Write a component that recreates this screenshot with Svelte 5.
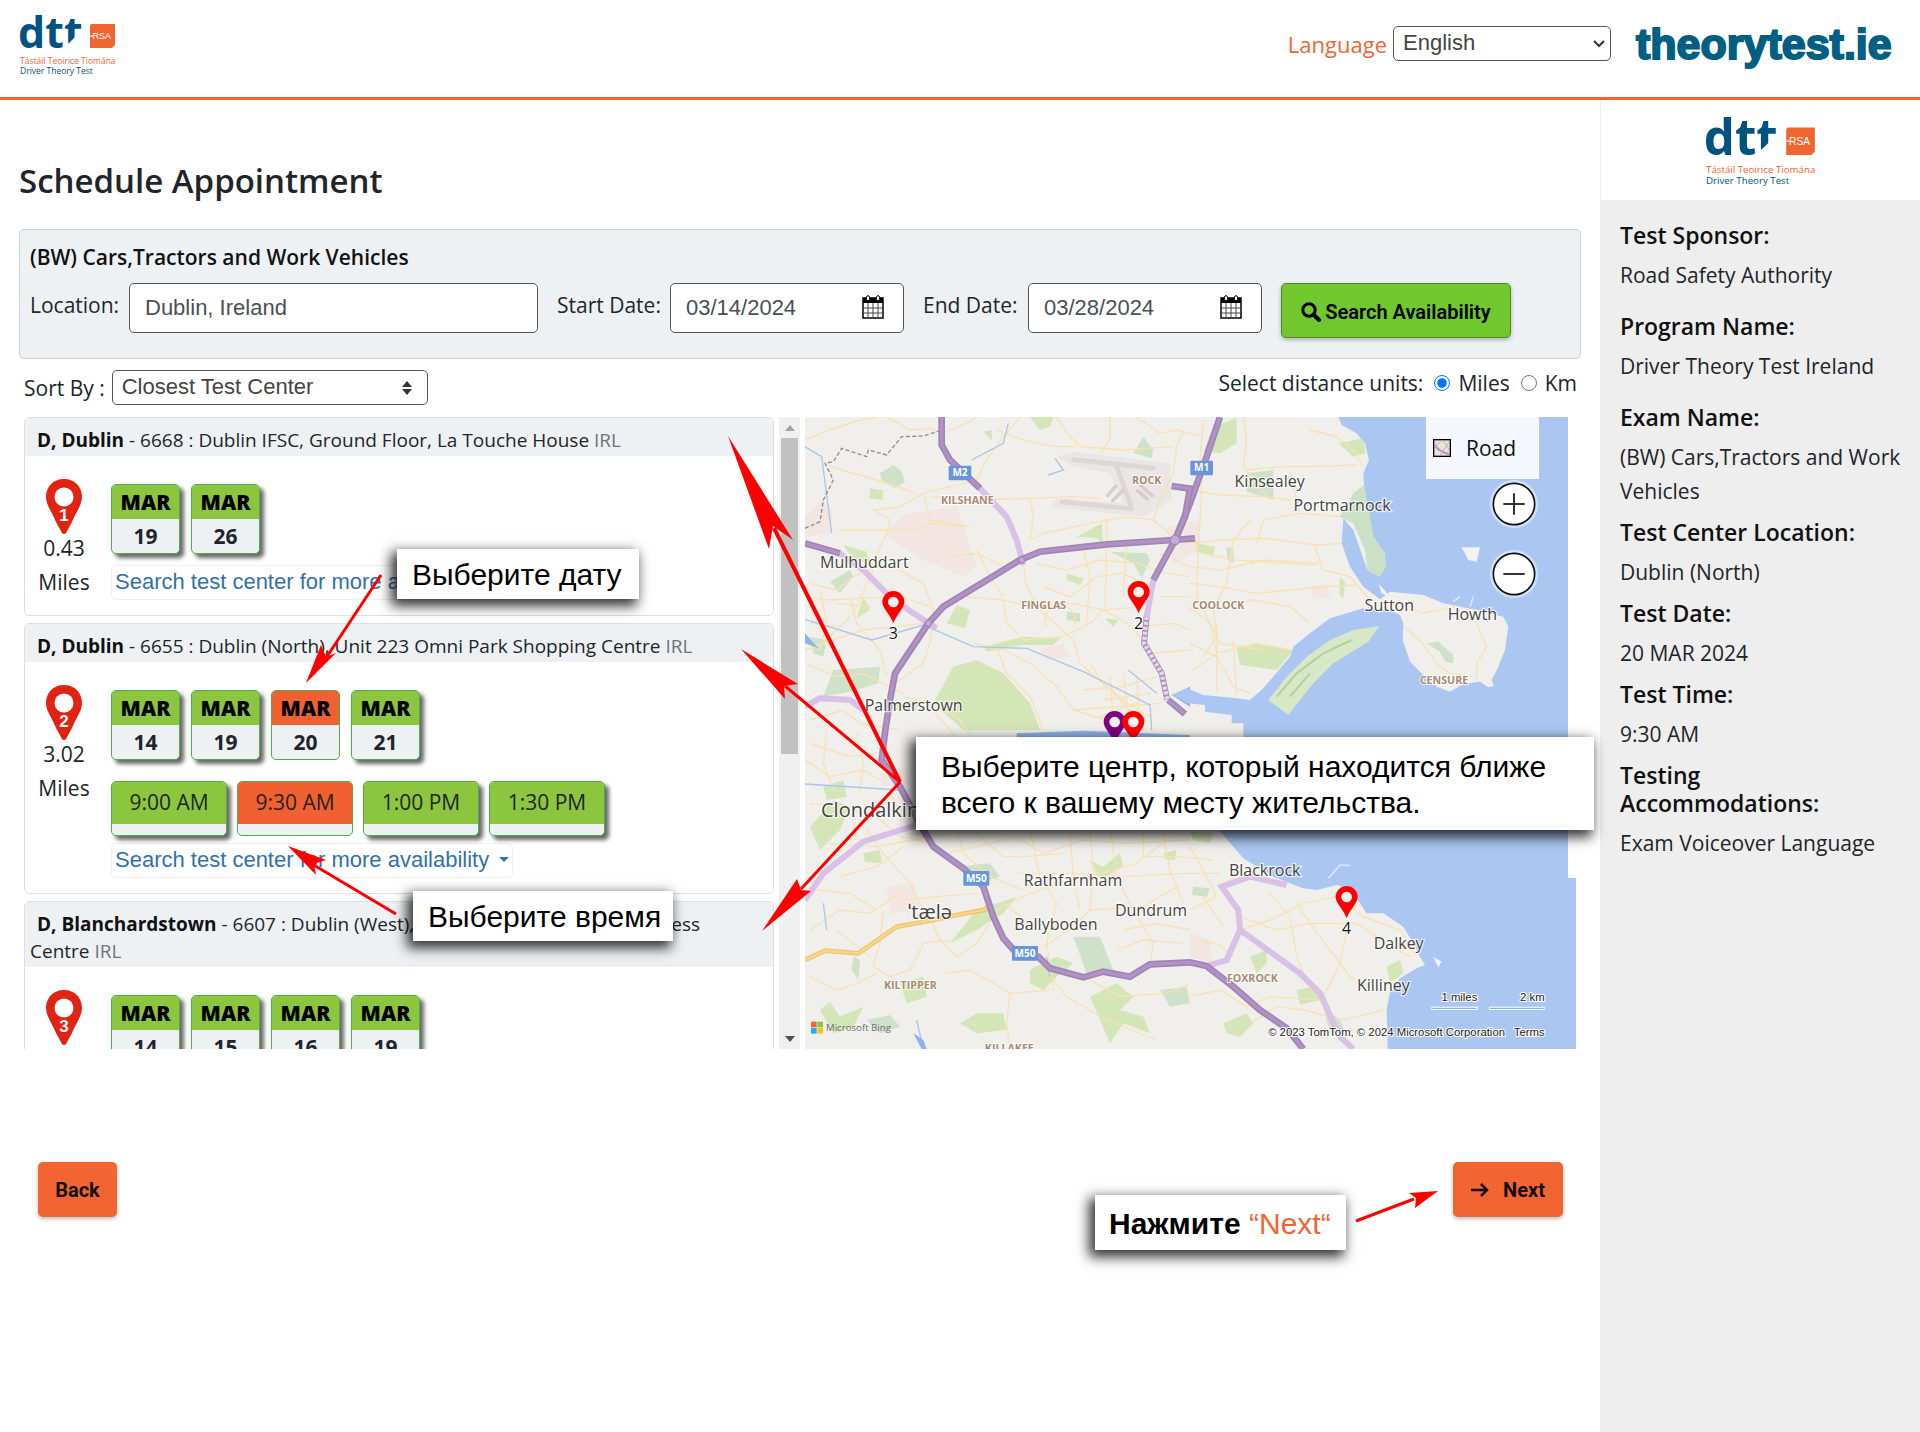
<script>
  let language = $state('English');
  let sort = $state('Closest Test Center');
  let place = $state('Dublin, Ireland');
  let startDate = $state('03/14/2024');
  let endDate = $state('03/28/2024');
  let units = $state('Miles');

  const centers = [
    {
      pin: 1, town: 'D, Dublin', name: ' - 6668 : Dublin IFSC, Ground Floor, La Touche House ', distance: '0.43',
      dates: [{ day: 19 }, { day: 26 }], times: []
    },
    {
      pin: 2, town: 'D, Dublin', name: ' - 6655 : Dublin (North), Unit 223 Omni Park Shopping Centre ', distance: '3.02',
      dates: [{ day: 14 }, { day: 19 }, { day: 20, on: true }, { day: 21 }],
      times: [{ at: '9:00 AM' }, { at: '9:30 AM', on: true }, { at: '1:00 PM' }, { at: '1:30 PM' }]
    },
    {
      pin: 3, town: 'D, Blanchardstown', name: ' - 6607 : Dublin (West), Unit 6, Westend Office Business Centre ', distance: '5.19',
      dates: [{ day: 14 }, { day: 15 }, { day: 16 }, { day: 19 }], times: []
    }
  ];

  const summary = [
    { label: 'Test Sponsor:', value: 'Road Safety Authority', wide: true },
    { label: 'Program Name:', value: 'Driver Theory Test Ireland', wide: true },
    { label: 'Exam Name:', value: '(BW) Cars,Tractors and Work Vehicles' },
    { label: 'Test Center Location:', value: 'Dublin (North)' },
    { label: 'Test Date:', value: '20 MAR 2024' },
    { label: 'Test Time:', value: '9:30 AM' },
    { label: 'Testing Accommodations:', value: 'Exam Voiceover Language' }
  ];

  const motorway = [
    'M1215 385L1150 390L950 403L750 425L690 450L460 590L415 640L315 790L300 870L286 960L275 1050L330 1130L400 1260L430 1310L520 1375L580 1430L610 1520L640 1585L680 1630L745 1640L780 1675L880 1702L940 1685L1020 1700L1080 1663L1200 1657L1250 1668L1330 1730L1410 1800L1490 1855L1540 1917',
    'M455 21L455 105L480 150L570 235',
    'M1290 21L1250 140L1200 280L1155 390L1090 510',
    'M1145 228L1200 236L1185 320L1155 390',
    'M45 400L150 430',
    'M1135 870L1185 912'
  ];
  const trunk = [
    'M570 235L650 320L680 390L700 465', 'M150 430L220 480L300 560L370 610L440 655',
    'M1090 510L1070 620', 'M45 890L90 865L180 870L220 900',
    'M45 1470L100 1390L220 1295L380 1245',
    'M1490 1425L1380 1400L1295 1430L1345 1500L1350 1560L1530 1690L1590 1750L1650 1880L1690 1917',
    'M1350 1560L1310 1650L1250 1668'
  ];
  const lanes = [
    'M45 90L120 60L210 30L260 21', 'M290 21L360 60L420 55L455 70L530 40L560 21', 'M690 21L640 80L590 150L560 210L480 230L400 250L330 290L250 300L300 330L290 370L250 450L240 480',
    'M400 250L420 330L530 350M420 260L560 270L720 265L850 260L940 265', 'M620 60L700 90L790 110L860 110M960 21L960 90L930 130M800 21L830 70L870 110L1000 120L1150 110',
    'M120 170L260 210L380 250M150 360L370 360L420 340L540 350M720 265L730 320L720 390', 'M720 390L760 370L900 340L1010 320L1090 330L1150 380M950 320L950 400L945 600',
    'M1090 330L1110 270L1150 190L1160 110L1180 60M1040 21L1110 70L1160 60L1240 80', 'M45 560L120 570L200 565L330 560L420 590M60 520L140 540L190 500L260 470',
    'M100 700L190 610L250 480M45 720L130 690L220 660L400 640', 'M180 560L200 640L270 720L290 800M290 460L400 520L430 600L420 700L400 760L300 830',
    'M470 590L520 560L640 570L720 590L850 580L940 600L1060 590', 'M700 465L710 530L760 610L850 690L870 760L960 840L1020 900',
    'M640 570L650 640L700 690L820 680L900 640L940 600L1010 640L1060 690', 'M770 650A45 45 0 1 1 850 650M760 530L840 560L920 500L1000 490L1080 530',
    'M740 460L830 480L930 450L1040 460L1130 490L1200 500', 'M550 700L640 720L720 760L800 830L850 900L950 930L1060 940M620 710L650 790L720 860L760 960',
    'M900 760L940 820L1010 880L1080 920M880 840L1000 830L1100 800M940 870L1080 850M960 800L970 940M1000 790L1020 950M1040 800L1050 960', 'M850 900L1110 880M930 920L1060 870',
    'M1110 430L1200 470L1290 480L1420 450L1600 460', 'M1200 240L1290 255L1420 260L1500 270M1240 30L1230 150L1235 260L1225 400L1220 560L1290 700',
    'M1200 400L1290 390L1430 385L1580 405L1660 400M1360 21L1370 90L1360 170L1400 220L1440 270M1370 180L1480 170L1560 170L1700 165', 'M1500 190L1530 310L1420 330L1400 400M1530 310L1650 320M1560 60L1640 80L1690 120L1720 170',
    'M1380 330L1330 390L1310 520L1270 600L1280 680L1240 740', 'M1200 520L1290 530L1400 550L1500 540L1610 530L1700 525M1240 430L1340 450L1580 465',
    'M1200 600L1300 590L1390 570L1500 590L1560 640', 'M1210 780L1280 730L1400 700L1500 720M1280 730L1260 640L1200 590M1290 700L1420 720M1280 640V850M1330 690L1340 860M1200 700L1280 740L1330 830L1380 850',
    'M1570 400L1600 480L1680 500L1740 570L1790 580L1900 610L1990 590L2060 640L2090 710L2060 760L2060 810', 'M1840 650L1890 690L1940 760L1980 790L2050 800',
    'M45 760L140 800L220 790L340 850M60 930L160 900L210 940L330 960M340 860L430 880L510 930L560 1000M420 890L480 960L540 1050',
    'M45 1050L120 1100L220 1080L270 1110M110 960L100 1060L130 1140M200 970L220 1060L210 1150M60 1000L180 1040L260 1030',
    'M60 1180L160 1190L260 1220L330 1280L430 1300M230 1260L280 1330L360 1420L400 1500M110 1300L260 1310L370 1290L480 1270M150 1400L260 1370L340 1310',
    'M280 1500L270 1600L250 1670L300 1700L360 1680L400 1600L480 1590M420 1520L450 1590L500 1640L560 1600L600 1540M330 1470L440 1460L560 1450',
    'M470 1330L560 1310L680 1280L760 1330L880 1290L1000 1300L1200 1290M620 1500L700 1460L800 1420L900 1400L1040 1360L1130 1290',
    'M720 1260L750 1400L800 1480L770 1600L790 1740M760 1610L840 1560L900 1500L1060 1490L1160 1430', 'M840 1260L850 1400L870 1500M960 1250L980 1400L1030 1500L1090 1600L1080 1660',
    'M1060 1260L1060 1340L1160 1340L1270 1350M680 1390L850 1390L1000 1400L1180 1390L1290 1390', 'M880 1700L990 1760L1130 1750L1200 1720M780 1700L830 1760L950 1830L1100 1890',
    'M470 1690L540 1680L610 1720L660 1750L780 1740M660 1750L650 1840L660 1917M60 1700L140 1740L200 1720L260 1690M140 1560L240 1640',
    'M1200 1310L1250 1400L1280 1460L1200 1500M1290 1430L1350 1390L1420 1410', 'M1350 1560L1440 1530L1540 1480L1640 1460L1720 1520L1830 1560L1880 1640',
    'M1350 1520L1460 1560L1560 1540L1700 1540L1790 1600L1860 1640M1440 1450L1500 1520L1520 1640L1540 1690', 'M1560 1540L1620 1620L1680 1700L1760 1740M1670 1560L1650 1660L1600 1760M1520 1480L1560 1540',
    'M1220 1590L1280 1600L1330 1640M1200 1760L1290 1740L1370 1790L1440 1760L1590 1770', 'M1380 1840L1460 1790L1540 1800L1660 1830L1780 1800M1240 1460L1300 1550',
    'M500 1260L520 1330L600 1400L700 1440M560 1270L640 1340L700 1340L820 1330M900 1260L910 1380L900 1500M1120 1270L1140 1380L1180 1480M640 1480L720 1540L860 1560M1000 1560L1100 1540L1200 1560M980 1620L1060 1590L1180 1600',
    'M60 1560L150 1500L240 1510L330 1450M80 1440L180 1450L260 1500M180 1180L200 1290M300 1150L340 1230M90 540L110 640L90 720M140 580L240 590M60 640L150 650',
    'M560 420L600 500L640 560M480 440L560 430L640 470M880 420L900 500L890 640M1010 410L1000 560M1050 650L1150 640L1200 660M1080 730L1200 720M1110 560L1200 560'
  ];
  const fields = [
    'M270 190L310 165L335 185L345 215L315 235L275 210Z', 'M240 235L280 240L278 270L238 265Z', 'M720 21L790 21L780 50L750 60Z', 'M1060 80L1090 120L1085 145L1030 130Z',
    'M580 65L605 60L605 90Z', 'M860 380L935 340L940 400L920 385Z', 'M960 425L1070 430L1080 450L1055 505L1030 460Z', 'M830 490L880 505L870 525L830 510Z',
    'M160 405L230 425L240 460L190 450Z', 'M120 515L180 480L190 500L150 550Z', 'M220 560L240 600L200 625Z', 'M470 640L500 585L540 600L525 655Z',
    'M100 860L130 780L270 770L265 820L180 845Z', 'M490 770L560 750L640 790L720 880L750 960L520 960L430 880Z', 'M580 710L700 680L810 685L790 705L700 705L590 725Z',
    'M830 605L870 610L870 635L830 630Z', 'M945 625L985 630L970 650Z', 'M1240 125L1270 50L1340 25L1340 100L1290 130Z', 'M1370 190L1450 180L1450 270L1370 245Z',
    'M1645 100L1720 85L1725 130L1690 140Z', 'M1220 400L1275 410L1270 440L1220 425Z', 'M1310 410L1330 415L1330 460L1312 450Z', 'M1340 710L1410 700L1510 720L1460 780L1350 765Z',
    'M1650 500L1665 515L1660 565L1648 555Z', 'M1910 700L1945 695L1990 735L1990 760L1965 755L1950 725Z', 'M60 1250L130 1170L180 1190L150 1260L90 1320Z', 'M220 1330L270 1320L275 1360L225 1355Z',
    'M500 1370L600 1360L630 1400L560 1420Z', 'M900 1350L940 1370L990 1330L1000 1370L930 1410Z', 'M480 1600L560 1500L680 1460L640 1510L560 1560Z', 'M850 1580L930 1580L970 1680L1000 1700L890 1690Z',
    'M720 1680L800 1640L850 1660L800 1700L760 1740L720 1720Z', 'M90 1800L120 1775L150 1820L220 1790L190 1850L130 1870Z', 'M230 1830L300 1815L330 1850L270 1870Z', 'M510 1840L560 1810L640 1810L650 1860L560 1870Z',
    'M900 1760L980 1720L1030 1760L990 1800L1060 1820L1080 1870L1000 1840L960 1900L930 1830Z', 'M1110 1740L1190 1730L1200 1780L1140 1790Z', 'M1300 1840L1370 1810L1390 1840L1350 1880L1310 1870Z',
    'M1520 1740L1570 1730L1590 1770L1530 1785Z', 'M1600 1790L1650 1830L1665 1870L1620 1870Z', 'M1790 1670L1830 1650L1840 1690L1800 1720Z', 'M1380 1640L1430 1620L1430 1660L1400 1690Z',
    'M1210 1430L1260 1435L1250 1460L1205 1455Z', 'M1200 1265L1270 1270L1260 1300L1210 1290Z', 'M330 1720L400 1700L410 1760L350 1780Z', 'M190 1640L210 1650L205 1710L185 1680Z',
    'M100 1130L160 1110L170 1160L110 1170Z', 'M310 880L380 870L385 900L320 900Z', 'M60 680L110 690L100 740L70 730Z', 'M1120 1330L1160 1320L1155 1350L1130 1350Z'
  ];
  const urban = [
    'M280 370L350 310L500 290L560 470L520 500L400 450Z', 'M45 320L100 270L130 300L120 370L45 380Z', 'M750 720L820 700L840 740L770 750Z', 'M270 1090L350 1070L360 1120L280 1130Z',
    'M290 1430L370 1420L390 1500L300 1510Z', 'M1560 530L1610 520L1620 560L1570 570Z', 'M1200 1570L1260 1590L1270 1660L1200 1640Z', 'M1130 350L1230 330L1230 420L1150 460Z'
  ];
  const towns = [
    { x: 223, y: 475, t: 'Mulhuddart' }, { x: 371, y: 902, t: 'Palmerstown' }, { x: 1439, y: 232, t: 'Kinsealey' }, { x: 1656, y: 302, t: 'Portmarnock' },
    { x: 1798, y: 602, t: 'Sutton' }, { x: 2047, y: 631, t: 'Howth' }, { x: 798, y: 1560, t: 'Ballyboden' }, { x: 1083, y: 1517, t: 'Dundrum' },
    { x: 849, y: 1428, t: 'Rathfarnham' }, { x: 1424, y: 1397, t: 'Blackrock' }, { x: 1826, y: 1616, t: 'Dalkey' }, { x: 1780, y: 1742, t: 'Killiney' }
  ];
  const areas = [
    { x: 532, y: 282, t: 'KILSHANE' }, { x: 1070, y: 222, t: 'ROCK' }, { x: 761, y: 597, t: 'FINGLAS' }, { x: 1285, y: 597, t: 'COOLOCK' },
    { x: 1962, y: 822, t: 'CENSURE' }, { x: 361, y: 1736, t: 'KILTIPPER' }, { x: 1387, y: 1715, t: 'FOXROCK' }, { x: 658, y: 1926, t: 'KILLAKEE' }
  ];
  const shields = [
    { x: 476, y: 167, t: 'M2' }, { x: 1201, y: 152, t: 'M1' }, { x: 520, y: 1383, t: 'M50' }, { x: 666, y: 1608, t: 'M50' }
  ];
  const markers = [
    { x: 974, y: 1000, c: '#800080', n: '' }, { x: 1030, y: 1000, c: '#ff0000', n: '' }, { x: 1046, y: 610, c: '#ff0000', n: 2 },
    { x: 310, y: 640, c: '#ff0000', n: 3 }, { x: 1670, y: 1525, c: '#ff0000', n: 4 }
  ];
</script>

{#snippet logo(cls)}
  <svg class={cls} viewBox="0 0 192 124" role="img" aria-label="Driver Theory Test, RSA">
    <text class="dtt" x="-4" y="68">dtt</text>
    <path d="M88 60H96L117 39H130V76H88Z" fill="#fff" />
    <path d="M142 20H190V62L184 68H140V24Z" fill="#f16531" />
    <path d="M139 44H147" stroke="#fff" stroke-width="2" />
    <text class="rsa" x="145" y="50">RSA</text>
    <text class="irish" x="0" y="99">Tástáil Teoirice Tiomána</text>
    <text class="eng" x="0" y="119">Driver Theory Test</text>
  </svg>
{/snippet}

{#snippet calendar()}
  <svg class="cal" viewBox="0 0 22 24" aria-hidden="true">
    <path d="M1 3H21V23H1Z" fill="#fff" stroke="#000" stroke-width="1.5" />
    <path d="M1 3H21V8H1Z" />
    <path d="M6 8V23M11 8V23M16 8V23M1 13H21M1 18H21" stroke="#444" fill="none" />
    <rect x="4.500" y="0.700" width="3" height="5" rx="1.500" fill="#fff" stroke="#000" />
    <rect x="14.500" y="0.700" width="3" height="5" rx="1.500" fill="#fff" stroke="#000" />
  </svg>
{/snippet}

<header class="top">
  {@render logo('logo')}
  <div class="lang">
    <label for="language">Language</label>
    <span class="pick">
      <select id="language" bind:value={language}><option>English</option></select>
      <svg viewBox="0 0 12 8" class="chev" aria-hidden="true"><path d="M1 1L6 6L11 1" fill="none" stroke="#333" stroke-width="2" /></svg>
    </span>
    <span class="site">theorytest.ie</span>
  </div>
</header>

<div class="page">
  <main>
    <h1>Schedule Appointment</h1>

    <section class="search">
      <h2>(BW) Cars,Tractors and Work Vehicles</h2>
      <div class="fields">
        <label class="l1" for="place">Location:</label>
        <input id="place" class="box" bind:value={place} />
        <label class="l2" for="start">Start Date:</label>
        <span class="date"><input id="start" class="box" bind:value={startDate} />{@render calendar()}</span>
        <label class="l2" for="end">End Date:</label>
        <span class="date"><input id="end" class="box" bind:value={endDate} />{@render calendar()}</span>
        <button class="find">
          <svg viewBox="0 0 20 20" aria-hidden="true"><circle cx="8" cy="8" r="6.200" fill="none" stroke="#000" stroke-width="3" /><path d="M12.500 12.500L18 18" stroke="#000" stroke-width="4" stroke-linecap="round" /></svg>
          Search Availability
        </button>
      </div>
    </section>

    <div class="sortbar">
      <label for="sort">Sort By :</label>
      <span class="pick sort">
        <select id="sort" bind:value={sort}><option>Closest Test Center</option></select>
        <svg viewBox="0 0 10 14" class="updown" aria-hidden="true"><path d="M0 6L5 0L10 6ZM0 8H10L5 14Z" fill="#333" /></svg>
      </span>
      <div class="units">
        <span>Select distance units:</span>
        <label><input type="radio" name="units" value="Miles" bind:group={units} />Miles</label>
        <label><input type="radio" name="units" value="Km" bind:group={units} />Km</label>
      </div>
    </div>

    <div class="results">
      <div class="list">
        {#each centers as c}
          <article>
            <h3><b>{c.town}</b>{c.name}<span class="irl">IRL</span></h3>
            <div class="body">
              <div class="where">
                <svg viewBox="0 0 38 55" aria-hidden="true">
                  <path d="M19 0C8 0 1 8 1 18C1 26 7 33 11 43L17 54Q19 56 21 54L27 43C31 33 37 26 37 18C37 8 30 0 19 0Z" fill="#e12313" />
                  <circle cx="19" cy="18" r="9.500" fill="#fff" />
                  <text x="19" y="42">{c.pin}</text>
                </svg>
                <span>{c.distance}</span>
                <span>Miles</span>
              </div>
              <div class="slots">
                <div class="row">
                  {#each c.dates as d}
                    <button class="day" class:on={d.on}><b>MAR</b><span>{d.day}</span></button>
                  {/each}
                </div>
                {#if c.times.length}
                  <div class="row times">
                    {#each c.times as t}
                      <button class="time" class:on={t.on}><span>{t.at}</span></button>
                    {/each}
                  </div>
                {/if}
                <button class="more" class:near={c.times.length}>Search test center for more availability <i></i></button>
              </div>
            </div>
          </article>
        {/each}
      </div>

      <div class="bar" aria-hidden="true">
        <svg viewBox="0 0 10 6"><path d="M0 6L5 0L10 6Z" fill="#a3a3a3" /></svg>
        <div class="thumb"></div>
        <svg viewBox="0 0 10 6"><path d="M0 0H10L5 6Z" fill="#505050" /></svg>
      </div>

      <svg class="map" viewBox="45 21 2313 1896" preserveAspectRatio="xMinYMin slice" role="img" aria-label="Map of Dublin test centers">
        <defs>
          <clipPath id="land">
            <path d="M45 21H1645L1655 45L1700 70L1725 100L1737 150L1720 190L1722 225L1735 300L1750 380L1785 430L1787 470L1768 500L1732 480L1718 440L1690 360L1660 325L1655 400L1680 470L1720 530L1770 568L1800 545L1900 555L1960 580L2060 600L2140 620L2155 650L2145 720L2125 770L2105 810L2112 828L2095 832L2070 815L2020 822L1980 845L1940 830L1895 790L1860 755L1838 690L1840 640L1830 615L1800 600L1720 595L1620 625L1560 670L1510 710L1500 740L1420 835L1380 870L1340 865L1240 855L1190 835L1150 855L1195 880L1245 885L1245 905L1325 915L1325 940L1360 940V1000H1200V1240H1275L1300 1275L1360 1345L1450 1400L1540 1435L1580 1440L1640 1425L1680 1435L1730 1510L1780 1510L1840 1550L1870 1600L1890 1640L1905 1665L1880 1675L1830 1705L1800 1745L1790 1800L1793 1917H45Z" />
          </clipPath>
        </defs>
        <rect x="45" y="21" width="2313" height="1896" fill="#abc6f1" />
        <g clip-path="url(#land)">
          <rect x="45" y="21" width="2313" height="1896" fill="#f0efeb" />
          {#each urban as d}<path {d} fill="#f3e5e1" />{/each}
          {#each fields as d, i}<path {d} fill={i % 3 === 0 ? '#d0e1ca' : '#d4e5b8'} />{/each}
          <path d="M1690 250L1722 225L1785 430L1787 470L1768 500L1732 480L1725 420L1690 340L1650 320Z" fill="#cbe0c4" />
          <path d="M800 140L850 125L1140 160L1145 270L1060 320L780 290L800 265L1000 280L960 190L850 170Z" fill="#e9e6e3" />
          <path d="M845 148L1095 175M810 275L1030 297M975 155L1025 295" stroke="#dcd7d5" stroke-width="14" fill="none" />
          <path d="M950 260L980 225M965 275L1000 240M1040 240L1075 270M1050 225L1090 260" stroke="#d8cbcb" stroke-width="10" />
          {#each lanes as d}<path {d} class="lane" />{/each}
          <path class="river" d="M45 628L245 690L400 645L550 710L710 715L880 785L1080 885L1085 960M655 40L640 100L545 150M795 145L820 180L775 195M45 110L95 140L125 370M45 1122L330 1140M770 1640L780 1700M380 1830L400 1917M100 1480L110 1560M1015 780L1100 850" />
          <path d="M370 1870L400 1890L410 1917H395ZM45 670L85 715L45 700ZM1145 855L1200 830V890ZM680 970L880 962L1200 975V1000H680Z" fill="#8fb2ea" />
          <path d="M45 355L90 335L100 270L130 210L105 160L130 155L155 115L230 140L235 120L290 135L335 80L400 78L455 60" class="border" />
          <path d="M45 1650L105 1622L205 1630L320 1550L430 1530L500 1515L580 1500L605 1485" fill="none" stroke="#eec06a" stroke-width="14" />
          <path d="M45 1650L105 1622L205 1630L320 1550L430 1530L500 1515L580 1500L605 1485" fill="none" stroke="#fad584" stroke-width="8" />
          {#each trunk as d}<path {d} class="trunk" />{/each}
          <path d="M1070 620L1062 700L1115 790L1132 870" fill="none" stroke="#a98fb4" stroke-width="18" />
          <path d="M1070 620L1062 700L1115 790L1132 870" fill="none" stroke="#e6d7ec" stroke-width="13" stroke-dasharray="10 5" />
          {#each motorway as d}<path {d} class="mway" /><path {d} class="mway in" />{/each}
          <circle cx="1155" cy="390" r="14" class="ring" />
          <circle cx="695" cy="450" r="9" class="ring" />
          <circle cx="415" cy="640" r="9" class="ring" />
        </g>
        <path d="M1768 648L1735 695L1630 760L1570 820L1495 915L1435 870L1490 800L1550 740L1620 690L1690 660Z" fill="#d7e8c6" />
        <path d="M1460 860L1520 790L1600 730L1685 690M1500 860L1560 790" fill="none" stroke="#b4d09f" stroke-width="6" />
        <path d="M2015 412L2070 412L2060 455L2035 450ZM1930 1640L1955 1655L1945 1672ZM1765 520L1800 560L1775 550Z" fill="#f3f3f1" />
        <path d="M1615 1405L1650 1365L1680 1366M1990 575L2010 560M2040 590L2050 560" fill="none" stroke="#dbe6f6" stroke-width="5" />
        {#each shields as s}
          <rect x={s.x} y={s.y} width={s.t.length > 2 ? 78 : 68} height="44" rx="3" fill="#6796dc" />
          <text class="shield" x={s.x + (s.t.length > 2 ? 39 : 34)} y={s.y + 32}>{s.t}</text>
        {/each}
        {#each towns as p}<text class="town" x={p.x} y={p.y}>{p.t}</text>{/each}
        <text class="town big" x="93" y="1221" text-anchor="start">Clondalkin</text>
        <text class="town big" x="420" y="1528">ˈtælə</text>
        {#each areas as p}<text class="area" x={p.x} y={p.y}>{p.t}</text>{/each}
        {#each markers as m}
          <path d="M{m.x} {m.y}C{m.x - 10} {m.y - 28} {m.x - 33} {m.y - 45} {m.x - 33} {m.y - 64}A33 33 0 0 1 {m.x + 33} {m.y - 64}C{m.x + 33} {m.y - 45} {m.x + 10} {m.y - 28} {m.x} {m.y}Z" fill={m.c} />
          <circle cx={m.x} cy={m.y - 64} r="16" fill="#f4f1ee" />
          <text class="num" x={m.x} y={m.y + 48}>{m.n}</text>
        {/each}
        <rect x="1908" y="21" width="339" height="186" fill="#f4f8fe" />
        <rect x="1931" y="89" width="50" height="50" fill="#e9e4da" stroke="#000" stroke-width="4" />
        <path d="M1934 104Q1945 125 1978 132" fill="none" stroke="#b48ed0" stroke-width="6" />
        <path d="M1934 110L1955 92M1960 92L1978 120M1950 137L1978 95" fill="none" stroke="#b9b3a2" stroke-width="3" />
        <text class="road" x="2028" y="137">Road</text>
        {#each [282, 492] as y}
          <circle cx="2172" cy={y} r="72" fill="#d3e1f7" />
          <circle cx="2172" cy={y} r="62" fill="#fff" stroke="#111" stroke-width="5" />
          <path d="M2140 {y}H2204" stroke="#333" stroke-width="6" />
        {/each}
        <path d="M2172 250V314" stroke="#333" stroke-width="6" />
        <text class="scale" x="2062" y="1774">1 miles</text>
        <text class="scale" x="2264" y="1774">2 km</text>
        <path d="M1924 1795H2063M2097 1795H2264" stroke="#fff" stroke-width="10" />
        <path d="M1927 1795H2060M2100 1795H2261" stroke="#7db2f5" stroke-width="4" />
        <text class="scale" x="2145" y="1877">© 2023 TomTom, © 2024 Microsoft Corporation</text>
        <text class="scale" x="2264" y="1877">Terms</text>
        <path d="M63 1835H80V1852H63Z" fill="#f2653a" /><path d="M82 1835H99V1852H82Z" fill="#8cc540" />
        <path d="M63 1854H80V1871H63Z" fill="#1fb0ef" /><path d="M82 1854H99V1871H82Z" fill="#fdc317" />
        <text class="bing" x="108" y="1863">Microsoft Bing</text>
        <rect x="2334" y="21" width="24" height="1383" fill="#fff" />
      </svg>
    </div>

    <div class="nav">
      <button class="go">Back</button>
      <button class="go next">
        <svg viewBox="0 0 18 16" aria-hidden="true"><path d="M0 8H16M10 2L16 8L10 14" fill="none" stroke="#111" stroke-width="2.500" /></svg>
        Next
      </button>
    </div>

    <svg class="arrows" viewBox="0 100 1600 1332" aria-hidden="true">
      <g fill="none" stroke="#f00">
        <path d="M381 575L326 658" stroke-width="3" />
        <path d="M396 914L312 864" stroke-width="3" />
        <path d="M900 782L774 528" stroke-width="4" />
        <path d="M900 782L785 686" stroke-width="3" />
        <path d="M900 782L801 889" stroke-width="3" />
        <path d="M1356 1221L1414 1199" stroke-width="3" />
      </g>
      <g fill="#f00">
        <path d="M306 683L321 645L326 657L336 653Z" />
        <path d="M288 846L326 860L314 864L316 875Z" />
        <path d="M728 436L793 540L773 526L769 549Z" />
        <path d="M741 649L798 684L784 686L785 699Z" />
        <path d="M762 931L797 879L801 890L811 891Z" />
        <path d="M1438 1191L1409 1193L1416 1198L1415 1208Z" />
      </g>
    </svg>

    <div class="note pickdate">Выберите дату</div>
    <div class="note picktime">Выберите время</div>
    <div class="note pickplace">Выберите центр, который находится ближе<br />всего к вашему месту жительства.</div>
    <div class="note picknext"><b>Нажмите</b> <span>“Next“</span></div>
  </main>

  <aside>
    <div class="brand">{@render logo('logo large')}</div>
    <dl>
      {#each summary as s}
        <div class:wide={s.wide}>
          <dt>{s.label}</dt>
          <dd>{s.value}</dd>
        </div>
      {/each}
    </dl>
  </aside>
</div>

<style>
  :global(body) { background: #fff; color: #212529; font-family: 'Open Sans', 'Noto Sans', sans-serif; font-size: 21px; }
  :global(*) { box-sizing: border-box; }
  button, input, select { font: inherit; color: inherit; }
  button { cursor: pointer; padding: 0; }
  h1, h2, h3, dl, dd { margin: 0; }

  .top { display: flex; justify-content: space-between; align-items: flex-start; height: 100px; padding: 14px 24px 0 20px; border-bottom: 3px solid #f16531; }
  .logo { width: 96px; height: 62px; overflow: visible; }
  .large { width: 110px; height: 71px; }
  .dtt { font-size: 86px; font-weight: 700; fill: #00537f; }
  .rsa { font: 18px 'Liberation Sans', sans-serif; fill: #fff; }
  .irish, .eng { font-size: 17px; fill: #f16531; }
  .eng { fill: #00537f; }

  .lang { display: flex; align-items: center; height: 59px; color: #f16531; font-size: 22px; }
  .pick { position: relative; display: block; width: 218px; margin: 0 25px 0 6px; }
  .pick select { appearance: none; display: block; width: 100%; height: 35px; padding: 0 9px 3px; border: 1px solid #555; border-radius: 5px; background: #fff; color: #444; font: 22px 'Liberation Sans', sans-serif; }
  .pick svg { position: absolute; pointer-events: none; }
  .chev { width: 12px; right: 6px; top: 14px; }
  .updown { width: 10px; right: 16px; top: 11px; }
  .site { width: 260px; font: 700 43px/62px 'Liberation Sans', sans-serif; color: #005f82; -webkit-text-stroke: 2px #005f82; white-space: nowrap; }

  .page { display: flex; min-height: calc(100vh - 100px); }
  main { position: relative; flex: 1; min-width: 0; padding: 60px 19px 0; }
  h1 { margin-bottom: 27px; font-size: 33px; line-height: 42px; font-weight: 600; }

  .search { height: 130px; padding: 10px; background: #eef1f4; border: 1px solid #cfd3d6; border-radius: 5px; }
  h2 { font-size: 21px; line-height: 34px; font-weight: 600; color: #111; }
  .fields { display: flex; align-items: flex-start; margin-top: 9px; }
  .fields label { flex: none; line-height: 44px; white-space: nowrap; }
  .l1 { width: 99px; }
  .l2 { width: 113px; }
  .box { width: 409px; height: 50px; padding: 0 15px; border: 1px solid #555; border-radius: 5px; background: #fff; color: #495057; font: 22px 'Liberation Sans', sans-serif; }
  .fields > .box, .date { margin-right: 19px; }
  .date { position: relative; width: 234px; }
  .date .box { display: block; width: 100%; }
  .l2 + .date + .l2 { width: 105px; }
  .cal { position: absolute; right: 20px; top: 12px; width: 22px; height: 24px; }
  .find { display: flex; align-items: center; justify-content: center; gap: 4px; width: 230px; height: 55px; padding-top: 2px; border: 1px solid #4c8c1e; border-radius: 5px; background: #70c72e; box-shadow: 0 2px 4px #0004; font: 600 20px Roboto, sans-serif; color: #000; white-space: nowrap; }
  .find svg { width: 20px; height: 20px; }

  .sortbar { display: flex; align-items: center; height: 35px; margin: 11px 4px 12px 5px; }
  .sort { width: 316px; margin: 0 auto 0 7px; }
  .units { display: flex; align-items: flex-start; gap: 11px; height: 44px; line-height: 34px; }
  .units label { display: flex; align-items: center; }
  .units input { width: 16px; height: 16px; margin: 0 8px 0 0; accent-color: #0075ff; }

  .results { display: grid; grid-template-columns: minmax(0, 750fr) 21px minmax(0, 771fr); gap: 5px; height: 632px; margin: 0 5px; }
  .list { overflow: hidden; }
  article { margin-bottom: 7px; border: 1px solid #dcdfe1; border-radius: 5px; }
  h3 { padding: 9px 24px 2px 5px; background: #eef1f4; font-size: 19px; line-height: 27px; font-weight: 400; text-indent: 7px; color: #212529; }
  h3 b { color: #111; }
  .irl { color: #6c757d; }
  .body { display: flex; padding: 23px 0 15px 6px; }
  .where { display: flex; flex-direction: column; align-items: center; width: 66px; line-height: 34px; }
  .where svg { width: 38px; height: 55px; margin-bottom: -3px; }
  .where svg text { font: 700 17px 'Liberation Sans', sans-serif; fill: #fff; text-anchor: middle; }
  .slots { padding: 5px 0 0 14px; }
  .row { display: flex; gap: 11px; }
  .times { gap: 10px; margin-top: 21px; }
  .day { display: flex; flex-direction: column; width: 69px; height: 70px; border: 1px solid #4cae4c; border-radius: 5px; overflow: hidden; background: #eef1f4; font-weight: 700; box-shadow: 4px 4px 4px #0009; line-height: 34px; }
  .day b { width: 100%; background: #8cc63f; color: #000; }
  .day span { width: 100%; }
  .time { width: 116px; height: 55px; border: 1px solid #4cae4c; border-radius: 5px; overflow: hidden; background: #eef1f4; box-shadow: 4px 4px 4px #0009; }
  .time span { display: block; height: 42px; margin-bottom: 11px; line-height: 40px; background: #8cc63f; }
  .on { box-shadow: none; }
  .on b, .on span:only-child { background: #f06030; }
  .more { display: flex; align-items: center; gap: 10px; height: 35px; margin-top: 11px; padding: 0 3px 2px; border: 1px solid #eceef0; border-radius: 5px; background: #fff; color: #3270ae; font: 22px 'Liberation Sans', sans-serif; white-space: nowrap; }
  .near { margin-top: 7px; }
  .more i { border: 5px solid transparent; border-top-color: #3270ae; border-bottom: 0; }
  .bar { display: flex; flex-direction: column; align-items: center; background: #f0f0f0; }
  .bar svg { width: 10px; height: 6px; margin: 8px 0 7px; flex: none; }
  .thumb { width: 17px; height: 50%; margin-bottom: auto; background: #c1c1c1; }

  .map { display: block; width: 100%; height: 100%; }
  .lane { fill: none; stroke: #f8e2b4; stroke-width: 4; }
  .river { fill: none; stroke: #aac6ec; stroke-width: 4; }
  .border { fill: none; stroke: #8f8d89; stroke-width: 4; stroke-dasharray: 12 7; }
  .trunk { fill: none; stroke: #d9c0e6; stroke-width: 18; }
  .mway { fill: none; stroke: #a084b4; stroke-width: 20; }
  .in { stroke: #b191c6; stroke-width: 10; }
  .ring { fill: #c8a8d8; stroke: #a58ab8; stroke-width: 4; }
  .town { font-size: 48px; fill: #444; text-anchor: middle; paint-order: stroke; stroke: #ffffffb0; stroke-width: 8; }
  .town[text-anchor] { text-anchor: start; }
  .big { font-size: 60px; }
  .area { font-size: 32px; font-weight: 700; fill: #a68a72; text-anchor: middle; paint-order: stroke; stroke: #fffc; stroke-width: 6; }
  .shield { font-size: 30px; font-weight: 700; fill: #fff; text-anchor: middle; }
  .num { font-size: 48px; fill: #111; text-anchor: middle; paint-order: stroke; stroke: #fff; stroke-width: 6; }
  .road { font-size: 63px; fill: #111; }
  .scale { font: 34px 'Liberation Sans', sans-serif; fill: #222; text-anchor: end; paint-order: stroke; stroke: #fff; stroke-width: 6; }
  .bing { font-size: 29px; font-weight: 500; fill: #6c6c6c; }

  .nav { display: flex; justify-content: space-between; margin: 113px 18px 0 19px; }
  .go { display: flex; align-items: center; justify-content: center; gap: 14px; width: 79px; height: 55px; border: 0; border-radius: 5px; background: #f26532; box-shadow: 0 2px 4px #0004; font: 700 20px Roboto, sans-serif; color: #111; }
  .next { width: 110px; }
  .go svg { width: 18px; height: 16px; }

  .arrows { position: absolute; left: 0; top: 0; width: 1600px; height: 1332px; pointer-events: none; }
  .note { position: absolute; background: #fff; color: #000; font: 30px/36px 'Liberation Sans', sans-serif; box-shadow: -4px 5px 12px 2px #000c; white-space: nowrap; }
  .pickdate { left: 397px; top: 449px; padding: 8px 17px 6px 15px; }
  .picktime { left: 413px; top: 791px; padding: 8px 12px 6px 15px; }
  .pickplace { left: 916px; top: 637px; width: 678px; padding: 12px 25px 9px; }
  .picknext { left: 1095px; top: 1095px; padding: 11px 15px 8px 14px; }
  .picknext span { color: #f16531; }

  aside { flex: none; width: 320px; background: #eee; color: #212529; }
  .brand { height: 100px; padding: 16px 0 0 105px; border-left: 1px solid #eee; background: #fff; }
  dl { padding: 21px 10px 0 20px; }
  dl div { margin-bottom: 10px; }
  dl .wide { margin-bottom: 20px; }
  dt { margin-bottom: 9px; padding-right: 20px; font-size: 23px; line-height: 28px; font-weight: 600; color: #111; }
  dd { line-height: 34px; }
</style>
